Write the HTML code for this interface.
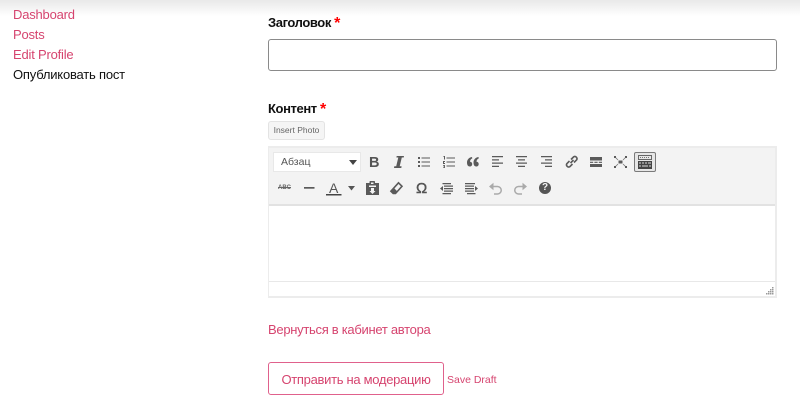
<!DOCTYPE html>
<html lang="ru"><head><meta charset="utf-8"><title>Опубликовать пост</title>
<style>
html,body{margin:0;padding:0;background:#fff}
body{width:800px;height:402px;position:relative;overflow:hidden;font-family:"Liberation Sans",sans-serif;color:#111}
#w{position:absolute;left:0;top:0;width:800px;height:402px;filter:blur(.3px)}
.t{position:absolute;white-space:nowrap}
a{color:#d6446f;text-decoration:none}
.nav{font-size:13px;letter-spacing:-.2px;line-height:20px;left:13px}
.top{position:absolute;left:0;top:0;width:800px;height:16px;background:linear-gradient(#e9e9e9,#fff)}
.lab{font-weight:bold;font-size:13px;letter-spacing:-.4px;left:268px;line-height:16px}
.lab i{font-style:normal;color:#f00;font-size:16px;margin-left:0;letter-spacing:0;position:relative;top:1px}
.box{position:absolute;box-sizing:border-box}
svg{position:absolute;overflow:visible}
.g{fill:#5a5a5a}
.s{fill:none;stroke:#5a5a5a;stroke-width:1.6}
</style></head><body><div id="w">
<div class="top"></div>
<a class="t nav" style="top:4.500px" href="#">Dashboard</a>
<a class="t nav" style="top:24.500px" href="#">Posts</a>
<a class="t nav" style="top:44.500px" href="#">Edit Profile</a>
<div class="t nav" style="top:64.500px;color:#111">Опубликовать пост</div>

<div class="t lab" style="top:15px">Заголовок <i>*</i></div>
<div class="box" style="left:268px;top:39px;width:509px;height:32px;border:1px solid #8a8a8a;border-radius:3px"></div>
<div class="t lab" style="top:101px">Контент <i>*</i></div>
<div class="box" style="left:268px;top:121px;width:57px;height:19px;background:#f5f5f5;border:1px solid #e3e3e3;border-radius:3px;font-size:8.500px;line-height:17px;text-align:center;color:#666">Insert Photo</div>

<div class="box" style="left:268px;top:146px;width:509px;height:152px;border:2px solid #ececec;border-left-width:1px;background:#fff"></div>
<div class="box" style="left:269px;top:148px;width:506px;height:58px;background:#f3f3f3;border-bottom:2px solid #e2e2e2"></div>
<div class="box" style="left:269px;top:281px;width:506px;height:1px;background:#e8e8e8"></div>
<div class="box" style="left:273px;top:152px;width:88px;height:20px;background:#fff;border:1px solid #e8e8e8;font-size:10.500px;line-height:18px;padding-left:7px;color:#555">Абзац</div>
<svg style="left:349px;top:160px" width="8" height="5"><path d="M0 0h8L4 5z" fill="#444"/></svg>

<div class="t" style="left:369px;top:155px;font:bold 14.500px/16px 'Liberation Sans',sans-serif;color:#555">B</div>
<svg style="left:393px;top:156px" width="11" height="12"><path class="g" d="M3.700 0H11l-.3 1.500H8.800L6.700 10.200h1.900L8.300 12H1l.3-1.800h1.900L5.300 1.500H3.400z"/></svg>
<svg style="left:418px;top:156px" width="12" height="12"><path class="g" d="M0 1h2v2H0zM0 5h2v2H0zM0 9h2v2H0zM3.500 1.500h8.500v1H3.500zM3.500 5.500h8.500v1H3.500zM3.500 9.500h8.500v1H3.500z"/></svg>
<svg style="left:443px;top:156px" width="12" height="12"><path class="g" d="M0.500 0h1.500v3.500H1V1H.5zM0 5h2v1H1v1h1v1H0zM0 9h2v3H0v-.6h1.200v-.6H.5v-.6h.7v-.5H0zM3.500 1.500h8.500v1H3.500zM3.500 5.500h8.500v1H3.500zM3.500 9.500h8.500v1H3.500z"/></svg>
<svg style="left:467px;top:157px" width="12" height="10"><path class="g" d="M5 0C2 .5 0 2.500 0 5.500 0 8 1 9.500 2.800 9.500 4.200 9.500 5.200 8.500 5.200 7 5.200 5.600 4.200 4.800 3 4.800 3 3 4 2 5.300 1.400zM11.500 0C8.500 .5 6.500 2.500 6.500 5.500c0 2.500 1 4 2.800 4 1.400 0 2.400-1 2.400-2.500 0-1.400-1-2.200-2.200-2.200 0-1.800 1-2.800 2.300-3.400z"/></svg>
<svg style="left:492px;top:156px" width="12" height="12"><path class="g" d="M0 0h11v1.300H0zM0 3.200h7v1.300H0zM0 6.500h11v1.300H0zM0 9.700h7V11H0z"/></svg>
<svg style="left:516px;top:156px" width="12" height="12"><path class="g" d="M0 0h11v1.300H0zM2 3.200h7v1.300H2zM0 6.500h11v1.300H0zM2 9.700h7V11H2z"/></svg>
<svg style="left:541px;top:156px" width="12" height="12"><path class="g" d="M0 0h11v1.300H0zM4 3.200h7v1.300H4zM0 6.500h11v1.300H0zM4 9.700h7V11H4z"/></svg>
<svg style="left:565px;top:155px" width="13" height="14"><path class="s" d="M5.500 8 8.500 5M4.500 6 1.800 8.700a2.200 2.200 0 0 0 3 3L7.500 9M6 4.500 8.700 1.800a2.200 2.200 0 0 1 3 3L9 7.500"/></svg>
<svg style="left:590px;top:157px" width="12" height="10"><path class="g" d="M0 0h12v3.500H0zM0 4.700h3.200v1.200H0zM4.400 4.700h3.200v1.200H4.400zM8.800 4.700H12v1.200H8.800zM0 7h12v3H0z"/></svg>
<svg style="left:614px;top:156px" width="13" height="12"><path class="g" d="M4.500 4.500h4v3h-4z"/><path d="M1 1 4 4M12 1 9 4M1 11l3-3M12 11 9 8" stroke="#777" stroke-width=".8" fill="none"/><path class="g" d="M0 0h2v2H0zM11 0h2v2h-2zM0 10h2v2H0zM11 10h2v2h-2z"/></svg>
<div class="box" style="left:634px;top:152px;width:22px;height:20px;background:#e6e6e6;border:1px solid #7a7a7a;border-radius:2px"></div>
<svg style="left:638px;top:155px" width="14" height="14"><path fill="none" stroke="#666" d="M.5.500h13v4H.5z"/><path fill="#777" d="M2 2h1v1H2zM4 2h1v1H4zM6 2h1v1H6zM8 2h1v1H8zM10 2h1v1h-1z"/><path fill="#444" d="M0 6h14v8H0z"/><path fill="#ddd" d="M1 7.500h2v1H1zM4 7.500h2v1H4zM7 7.500h2v1H7zM10 7.500h3v1h-3zM1 10.500h2v1H1zM4 10.500h6v1H4zM11 10.500h2v1h-2z"/></svg>

<div class="t" style="left:278px;top:184px;font:bold 6px/9px 'Liberation Sans',sans-serif;color:#666;text-decoration:line-through">ABC</div>
<svg style="left:304px;top:187px" width="11" height="2"><path class="g" d="M0 0h10.500v1.700H0z"/></svg>
<div class="t" style="left:329px;top:181px;font:14px/14px 'Liberation Sans',sans-serif;color:#555">A</div>
<svg style="left:326px;top:194px" width="16" height="2"><path d="M0 0h15.500v1.500H0z" fill="#444"/></svg>
<svg style="left:348px;top:186px" width="7" height="5"><path d="M0 0h7L3.500 4.500z" fill="#555"/></svg>
<svg style="left:366px;top:181px" width="13" height="14"><path class="g" fill-rule="evenodd" d="M0 2h3.500V.8C3.500.3 4 0 4.500 0h3.500c.6 0 1 .3 1 .8V2H13v12H0zM5 1.500v1.500h2.500V1.500zM3 4.500V6h7V4.500zM5 7h3v3h1.500L6.500 13 3.500 10H5z"/></svg>
<svg style="left:390px;top:182px" width="13" height="13"><path class="s" d="M8.500.8 12 4.300 5.500 11.500H3.200L.9 9.200z"/><path class="g" d="M.9 9.200 4 6 7.400 9.500 5.500 11.500H3.200z"/></svg>
<div class="t" style="left:416px;top:181px;font:15px/15px 'Liberation Sans',sans-serif;color:#555;-webkit-text-stroke:.4px #555">Ω</div>
<svg style="left:440px;top:183px" width="13" height="12"><path class="g" d="M2.500 0h8.500v1.200H2.500zM4 2.500h9v1.200H4zM4 5h9v1.200H4zM4 7.500h9v1.200H4zM2.500 10h8.500v1.200H2.500zM3 3v5L0 5.500z"/></svg>
<svg style="left:465px;top:183px" width="13" height="12"><path class="g" d="M0 0h10v1.200H0zM0 2.500h9v1.200H0zM0 5h9v1.200H0zM0 7.500h9v1.200H0zM2 10h8.500v1.200H2zM10 3v5l3-2.500z"/></svg>
<svg style="left:489px;top:182px" width="13" height="13"><path d="M1 4.500h7.500a3.700 3.700 0 0 1 0 7.500H5" fill="none" stroke="#aaa" stroke-width="1.500"/><path d="M4.500 .8v7.400L0 4.500z" fill="#aaa"/></svg>
<svg style="left:514px;top:182px" width="13" height="13"><path d="M12 4.500H4.500a3.700 3.700 0 0 0 0 7.500H8" fill="none" stroke="#aaa" stroke-width="1.500"/><path d="M8.500 .8v7.400L13 4.500z" fill="#aaa"/></svg>
<div class="t" style="left:539px;top:182px;width:12px;height:12px;border-radius:50%;background:#555;color:#f3f3f3;font:bold 10px/12px 'Liberation Sans',sans-serif;text-align:center">?</div>

<svg style="left:766px;top:287px" width="8" height="8"><path fill="#999" d="M6 0h1.500v1.500H6zM4 2h1.500v1.500H4zM6 2h1.500v1.500H6zM2 4h1.500v1.500H2zM4 4h1.500v1.500H4zM6 4h1.500v1.500H6zM0 6h1.500v1.500H0zM2 6h1.500v1.500H2zM4 6h1.500v1.500H4zM6 6h1.500v1.500H6z"/></svg>

<a class="t" style="left:268px;top:322px;font-size:13px;letter-spacing:-.29px;line-height:16px" href="#">Вернуться в кабинет автора</a>
<div class="box" style="left:268px;top:362px;width:176px;height:33px;border:1px solid #e0618c;border-radius:3px;font-size:13px;letter-spacing:-.3px;line-height:33px;text-align:center;color:#d6446f">Отправить на модерацию</div>
<a class="t" style="left:447px;top:373px;font-size:10.500px;line-height:14px" href="#">Save Draft</a>
</div></body></html>
